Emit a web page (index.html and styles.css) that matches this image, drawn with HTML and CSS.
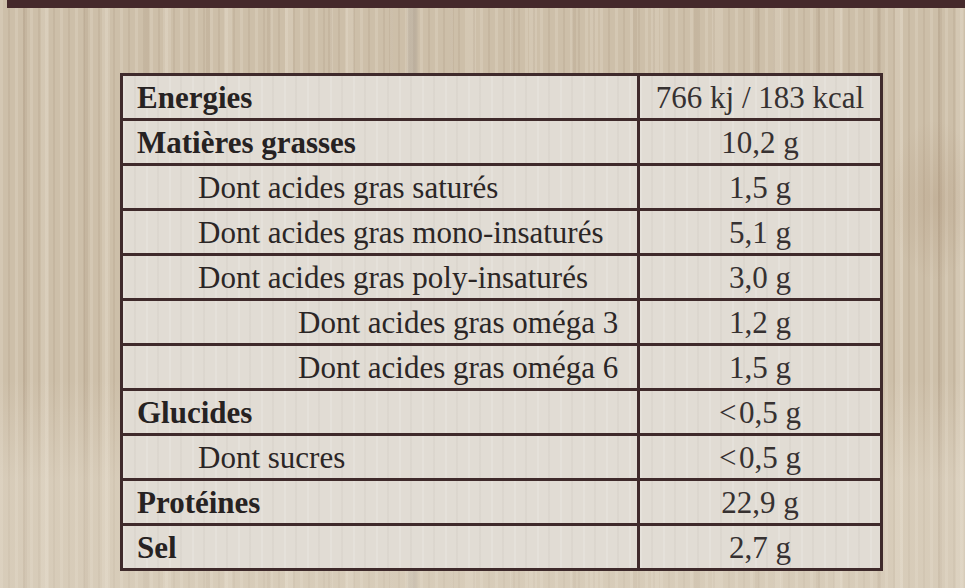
FILE: index.html
```html
<!DOCTYPE html>
<html lang="fr">
<head>
<meta charset="utf-8">
<title>Valeurs nutritionnelles</title>
<link rel="stylesheet" href="styles.css">
</head>
<body>
<div class="page">
  <div class="top-band"></div>
  <div class="nutri">
    <div class="cell label bold">Energies</div><div class="cell value">766 kj / 183 kcal</div>
    <div class="cell label bold">Matières grasses</div><div class="cell value">10,2 g</div>
    <div class="cell label lvl1">Dont acides gras saturés</div><div class="cell value">1,5 g</div>
    <div class="cell label lvl1">Dont acides gras mono-insaturés</div><div class="cell value">5,1 g</div>
    <div class="cell label lvl1">Dont acides gras poly-insaturés</div><div class="cell value">3,0 g</div>
    <div class="cell label lvl2">Dont acides gras oméga 3</div><div class="cell value">1,2 g</div>
    <div class="cell label lvl2">Dont acides gras oméga 6</div><div class="cell value">1,5 g</div>
    <div class="cell label bold">Glucides</div><div class="cell value">&lt;&#8202;0,5 g</div>
    <div class="cell label lvl1">Dont sucres</div><div class="cell value">&lt;&#8202;0,5 g</div>
    <div class="cell label bold">Protéines</div><div class="cell value">22,9 g</div>
    <div class="cell label bold">Sel</div><div class="cell value">2,7 g</div>
  </div>
</div>
</body>
</html>
```

FILE: styles.css
```css
html, body {
  margin: 0;
  padding: 0;
}
body {
  width: 965px;
  height: 588px;
  overflow: hidden;
  font-family: "Liberation Serif", "Times New Roman", serif;
  background-color: #cdbfa9;
  background-image:
    radial-gradient(ellipse 45px 80px at 935px 200px, rgba(160,130,100,0.22), rgba(160,130,100,0) 100%),
    linear-gradient(180deg, rgba(0,0,0,0) 0 380px, rgba(235,228,215,0.35) 480px, rgba(235,228,215,0.35) 588px),
    linear-gradient(90deg, rgba(0,0,0,0) 406px, rgba(150,140,130,0.28) 409px, rgba(150,140,130,0.28) 416px, rgba(0,0,0,0) 419px),
    repeating-linear-gradient(90deg, rgba(255,250,240,0.14) 0 3px, rgba(0,0,0,0) 3px 8px, rgba(130,105,80,0.1) 8px 10px, rgba(0,0,0,0) 10px 15px),
    repeating-linear-gradient(90deg, rgba(0,0,0,0) 0 23px, rgba(140,115,90,0.12) 23px 27px, rgba(0,0,0,0) 27px 41px, rgba(255,250,240,0.14) 41px 49px, rgba(0,0,0,0) 49px 61px);
}
.page {
  display: flex;
  flex-direction: column;
}
.top-band {
  height: 8px;
  margin-left: 7px;
  background: #45292b;
}
.nutri {
  margin: 65px 0 0 120px;
  width: 763px;
  box-sizing: border-box;
  display: grid;
  grid-template-columns: 514px 240px;
  grid-auto-rows: 42px;
  gap: 3px 3px;
  padding: 3px;
  background: #3f2a2b;
}
.cell {
  background-color: #e1dcd4;
  background-image:
    repeating-linear-gradient(90deg, rgba(255,255,255,0.14) 0 2px, rgba(0,0,0,0) 2px 11px, rgba(150,140,130,0.07) 11px 13px, rgba(0,0,0,0) 13px 23px);
  color: #2b2626;
  font-size: 31px;
  line-height: 44px;
  white-space: nowrap;
}
.label {
  padding-left: 14px;
}
.bold {
  font-weight: bold;
  color: #262222;
}
.lvl1 {
  padding-left: 75px;
}
.lvl2 {
  padding-left: 175px;
}
.value {
  text-align: center;
  color: #363131;
}
```
